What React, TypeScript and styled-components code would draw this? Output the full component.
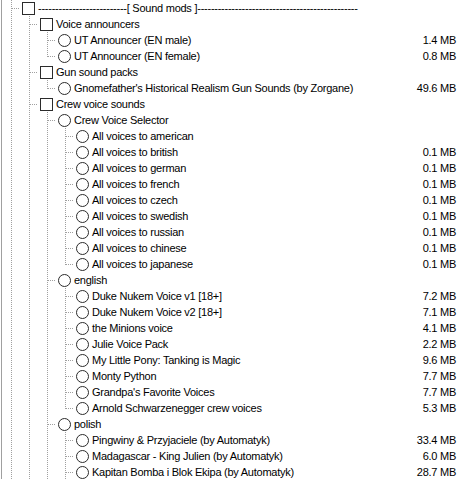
import * as React from 'react'
import styled, { createGlobalStyle } from 'styled-components'

type Kind = 'check' | 'radio'

interface ModNode {
  label: string
  kind: Kind
  size?: string
  more?: boolean
  children?: ModNode[]
}

interface FlatRow {
  node: ModNode
  depth: number
  trail: boolean[]
  hasNext: boolean
}

const radio = (label: string, size?: string): ModNode => ({ label, kind: 'radio', size })

const dashes = (n: number) => '-'.repeat(n)

const tree: ModNode[] = [
  {
    label: `${dashes(26)}[ Sound mods ]${dashes(47)}`,
    kind: 'check',
    more: true,
    children: [
      {
        label: 'Voice announcers',
        kind: 'check',
        children: [radio('UT Announcer (EN male)', '1.4 MB'), radio('UT Announcer (EN female)', '0.8 MB')],
      },
      {
        label: 'Gun sound packs',
        kind: 'check',
        children: [radio("Gnomefather's Historical Realism Gun Sounds (by Zorgane)", '49.6 MB')],
      },
      {
        label: 'Crew voice sounds',
        kind: 'check',
        more: true,
        children: [
          {
            label: 'Crew Voice Selector',
            kind: 'radio',
            children: [
              radio('All voices to american'),
              radio('All voices to british', '0.1 MB'),
              radio('All voices to german', '0.1 MB'),
              radio('All voices to french', '0.1 MB'),
              radio('All voices to czech', '0.1 MB'),
              radio('All voices to swedish', '0.1 MB'),
              radio('All voices to russian', '0.1 MB'),
              radio('All voices to chinese', '0.1 MB'),
              radio('All voices to japanese', '0.1 MB'),
            ],
          },
          {
            label: 'english',
            kind: 'radio',
            children: [
              radio('Duke Nukem Voice v1 [18+]', '7.2 MB'),
              radio('Duke Nukem Voice v2 [18+]', '7.1 MB'),
              radio('the Minions voice', '4.1 MB'),
              radio('Julie Voice Pack', '2.2 MB'),
              radio('My Little Pony: Tanking is Magic', '9.6 MB'),
              radio('Monty Python', '7.7 MB'),
              radio("Grandpa's Favorite Voices", '7.7 MB'),
              radio('Arnold Schwarzenegger crew voices', '5.3 MB'),
            ],
          },
          {
            label: 'polish',
            kind: 'radio',
            more: true,
            children: [
              radio('Pingwiny & Przyjaciele (by Automatyk)', '33.4 MB'),
              radio('Madagascar - King Julien (by Automatyk)', '6.0 MB'),
              { ...radio('Kapitan Bomba i Blok Ekipa (by Automatyk)', '28.7 MB'), more: true },
            ],
          },
        ],
      },
    ],
  },
]

// walk the tree into rows, remembering which ancestor lines keep running down
const flatten = (nodes: ModNode[], depth = 0, trail: boolean[] = []): FlatRow[] =>
  nodes.flatMap((node, i) => {
    const hasNext = i < nodes.length - 1 || !!node.more
    const row: FlatRow = { node, depth, trail, hasNext }
    return [row, ...flatten(node.children ?? [], depth + 1, [...trail, hasNext])]
  })

const rows = flatten(tree)

const LINE = '#a0a0a0'

// one 18px column of dotted tree lines
const Lane: React.FC<{ through?: boolean; branch?: boolean; last?: boolean }> = ({ through, branch, last }) => (
  <LaneBox width="18" height="16" viewBox="0 0 18 16" shapeRendering="crispEdges">
    {through && <line x1="9.5" y1="0" x2="9.5" y2="16" stroke={LINE} strokeDasharray="1 1" />}
    {branch && (
      <>
        <line x1="9.5" y1="0" x2="9.5" y2={last ? 9 : 16} stroke={LINE} strokeDasharray="1 1" />
        <line x1="10" y1="8.5" x2="18" y2="8.5" stroke={LINE} strokeDasharray="1 1" />
      </>
    )}
  </LaneBox>
)

const TreeRow: React.FC<{ row: FlatRow }> = ({ row }) => (
  <Row>
    {row.trail.map((open, k) => (
      <Lane key={k} through={open} />
    ))}
    <Lane branch last={!row.hasNext} />
    <Mark $kind={row.node.kind} />
    <Label>{row.node.label}</Label>
    {row.node.size && <Size>{row.node.size}</Size>}
  </Row>
)

const App: React.FC = () => (
  <>
    <GlobalStyle />
    <TreeView>
      {rows.map((row, i) => (
        <TreeRow key={i} row={row} />
      ))}
    </TreeView>
  </>
)

const GlobalStyle = createGlobalStyle`
  html, body {
    margin: 0;
    background: #ffffff;
  }
  body {
    font-family: "Liberation Sans", Tahoma, Arial, sans-serif;
    font-size: 11px;
    letter-spacing: -0.25px;
    color: #000000;
  }
`

const TreeView = styled.div`
  height: 479px;
  overflow: hidden;
  margin-left: 1px;
  border-left: 1px solid #a0a0a0;
`

const Row = styled.div`
  display: flex;
  align-items: center;
  height: 16px;
  white-space: nowrap;
`

const LaneBox = styled.svg`
  flex: none;
  display: block;
`

const Mark = styled.span<{ $kind: Kind }>`
  flex: none;
  box-sizing: border-box;
  width: 13px;
  height: 13px;
  margin-left: 2px;
  border: 1px solid #2b2b2b;
  background: #ffffff;
  border-radius: ${p => (p.$kind === 'radio' ? '50%' : '0')};
`

const Label = styled.span`
  flex: 1;
  padding-left: 3px;
  line-height: 16px;
  overflow: hidden;
`

const Size = styled.span`
  flex: none;
  padding: 0 2px 0 8px;
  line-height: 16px;
`

export default App
